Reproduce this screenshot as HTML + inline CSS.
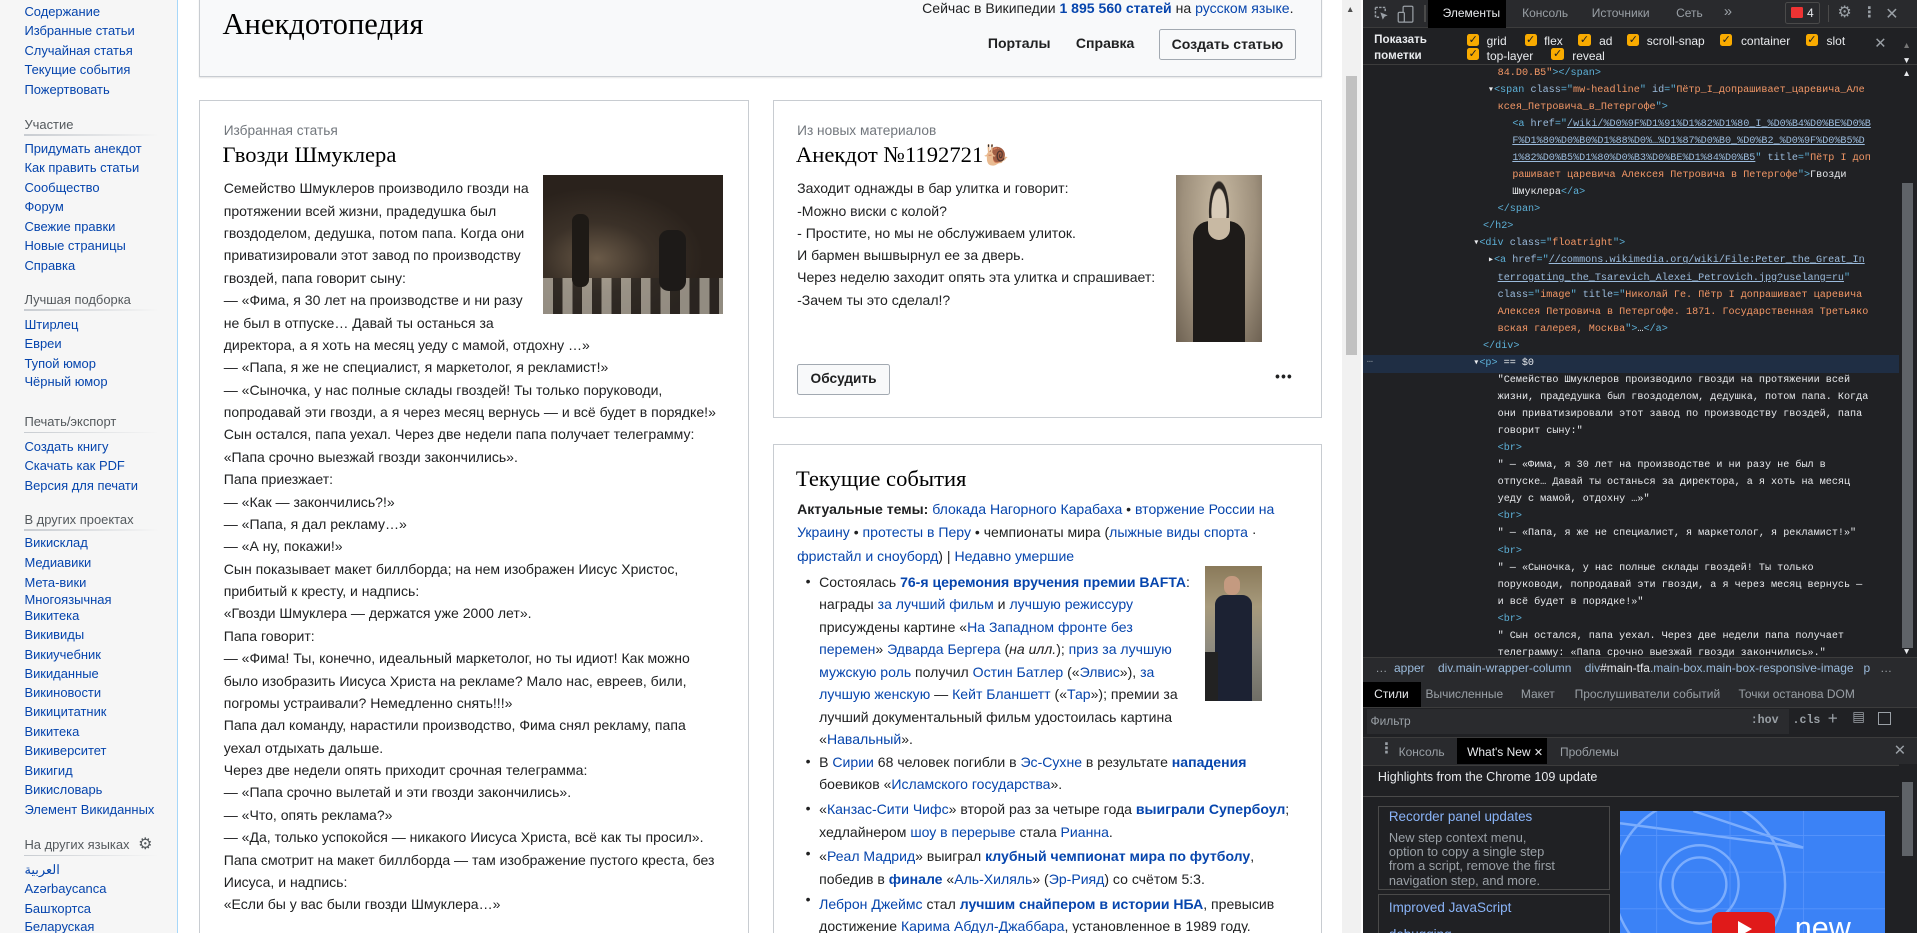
<!DOCTYPE html>
<html><head><meta charset="utf-8">
<style>
html,body{margin:0;padding:0;overflow:hidden;width:1917px;height:933px;background:#fff}
#w{position:absolute;left:0;top:0;width:1568px;height:763px;zoom:1.22258;overflow:hidden;font-family:"Liberation Sans",Arial,sans-serif}
.a{position:absolute;white-space:nowrap}
a,.l{color:#0645ad;text-decoration:none}
#side{position:absolute;left:0;top:0;width:145px;height:763px;background:#f6f6f6;border-right:1px solid #a7d7f9}
#side .a{font-size:10.6px;left:20px;color:#0645ad}
#side .h{color:#54595d}
#side .hr{position:absolute;left:20px;width:110px;height:1px;background:linear-gradient(90deg,#c8ccd1,#f6f6f6)}
.card{position:absolute;border:1px solid #c8ccd1;background:#fff;box-sizing:border-box}
.txt{font-size:11.5px;color:#202122}
.ser{font-family:"Liberation Serif","Noto Serif CJK SC",serif;color:#000}
.gray{color:#72777d;font-size:11.2px}
.btn{position:absolute;border:1px solid #a2a9b1;border-radius:2px;background:#f8f9fa;font-weight:bold;font-size:11.2px;color:#202122;box-sizing:border-box;text-align:center}
#dt{position:absolute;left:1115px;top:0;width:453px;height:763px;background:#202124;font-family:"Liberation Sans","DejaVu Sans",sans-serif;color:#9aa0a6;font-size:9.8px}
.mono{font-family:"Liberation Mono","DejaVu Sans Mono",monospace;font-size:8.3px}
.tg{color:#5db0d7}.an{color:#9bbbdc}.av{color:#f29766}.tx{color:#e8eaed}.un{text-decoration:underline;color:#9bbbdc}
.cb{position:absolute;width:10px;height:10px;background:#f9ab00;border-radius:2px;color:#202124;font-size:9px;line-height:10px;text-align:center;font-weight:bold}
</style></head><body><div id="w">

<div id="side">
<div class="a" style="top:3px">Содержание</div>
<div class="a" style="top:19px">Избранные статьи</div>
<div class="a" style="top:35px">Случайная статья</div>
<div class="a" style="top:51px">Текущие события</div>
<div class="a" style="top:67px">Пожертвовать</div>
<div class="a h" style="top:96px">Участие</div><div class="hr" style="top:110px"></div>
<div class="a" style="top:115px">Придумать анекдот</div>
<div class="a" style="top:131px">Как править статьи</div>
<div class="a" style="top:147px">Сообщество</div>
<div class="a" style="top:163px">Форум</div>
<div class="a" style="top:179px">Свежие правки</div>
<div class="a" style="top:195px">Новые страницы</div>
<div class="a" style="top:211px">Справка</div>
<div class="a h" style="top:239px">Лучшая подборка</div><div class="hr" style="top:253px"></div>
<div class="a" style="top:259px">Штирлец</div>
<div class="a" style="top:275px">Евреи</div>
<div class="a" style="top:291px">Тупой юмор</div>
<div class="a" style="top:306px">Чёрный юмор</div>
<div class="a h" style="top:339px">Печать/экспорт</div><div class="hr" style="top:353px"></div>
<div class="a" style="top:359px">Создать книгу</div>
<div class="a" style="top:375px">Скачать как PDF</div>
<div class="a" style="top:391px">Версия для печати</div>
<div class="a h" style="top:419px">В других проектах</div><div class="hr" style="top:433px"></div>
<div class="a" style="top:438px">Викисклад</div>
<div class="a" style="top:454px">Медиавики</div>
<div class="a" style="top:470px">Мета-вики</div>
<div class="a" style="top:484px;line-height:13px">Многоязычная<br>Викитека</div>
<div class="a" style="top:513px">Викивиды</div>
<div class="a" style="top:529px">Викиучебник</div>
<div class="a" style="top:545px">Викиданные</div>
<div class="a" style="top:560px">Викиновости</div>
<div class="a" style="top:576px">Викицитатник</div>
<div class="a" style="top:592px">Викитека</div>
<div class="a" style="top:608px">Викиверситет</div>
<div class="a" style="top:624px">Викигид</div>
<div class="a" style="top:640px">Викисловарь</div>
<div class="a" style="top:656px">Элемент Викиданных</div>
<div class="a h" style="top:685px">На других языках</div><div class="a h" style="left:113px;top:682px;font-size:13px">⚙</div><div class="hr" style="top:699px"></div>
<div class="a" style="top:705px">العربية</div>
<div class="a" style="top:721px">Azərbaycanca</div>
<div class="a" style="top:737px">Башҡортса</div>
<div class="a" style="top:752px">Беларуская</div>
</div>

<!-- header card -->
<div class="card" style="left:163px;top:-5px;width:918px;height:68px;background:#f8f9fa;box-shadow:0 1px 1px rgba(0,0,0,.1)"></div>
<div class="a ser" style="left:182px;top:6px;font-size:25px">Анекдотопедия</div>
<div class="a" style="right:510px;top:0px;font-size:11.5px;color:#202122">Сейчас в Википедии <b class="l">1 895 560 статей</b> на <span class="l">русском языке</span>.</div>
<div class="a" style="left:808px;top:29px;font-size:11.5px;font-weight:bold;color:#202122">Порталы</div>
<div class="a" style="left:880px;top:29px;font-size:11.5px;font-weight:bold;color:#202122">Справка</div>
<div class="btn" style="left:948px;top:24px;width:112px;height:25px;line-height:23px;font-size:11.5px">Создать статью</div>

<!-- card1 -->
<div class="card" style="left:163px;top:82px;width:450px;height:700px"></div>
<div class="a gray" style="left:183px;top:101px">Избранная статья</div>
<div class="a ser" style="left:182px;top:116px;font-size:18.5px">Гвозди Шмуклера</div>
<div class="a" style="left:444px;top:143px;width:147px;height:114px;background:radial-gradient(ellipse at 30% 60%,#6a5a48 0,#3b3128 30%,#2a221c 60%),#2a221c"><div style="position:absolute;left:0;bottom:0;width:147px;height:30px;background:repeating-linear-gradient(90deg,#d8d2c4 0 8px,#2a2622 8px 16px);opacity:.6"></div><div style="position:absolute;left:24px;top:32px;width:14px;height:60px;background:#1e1a16;border-radius:6px"></div><div style="position:absolute;left:95px;top:45px;width:22px;height:50px;background:#1d1a18;border-radius:8px"></div></div>
<div class="txt" style="position:absolute;left:183px;top:145px;line-height:18.3px;white-space:nowrap">
Семейство Шмуклеров производило гвозди на<br>протяжении всей жизни, прадедушка был<br>гвоздоделом, дедушка, потом папа. Когда они<br>приватизировали этот завод по производству<br>гвоздей, папа говорит сыну:<br>— «Фима, я 30 лет на производстве и ни разу<br>не был в отпуске… Давай ты останься за<br>директора, а я хоть на месяц уеду с мамой, отдохну …»<br>— «Папа, я же не специалист, я маркетолог, я рекламист!»<br>— «Сыночка, у нас полные склады гвоздей! Ты только поруководи,<br>попродавай эти гвозди, а я через месяц вернусь — и всё будет в порядке!»<br>Сын остался, папа уехал. Через две недели папа получает телеграмму:<br>«Папа срочно выезжай гвозди закончились».<br>Папа приезжает:<br>— «Как — закончились?!»<br>— «Папа, я дал рекламу…»<br>— «А ну, покажи!»<br>Сын показывает макет биллборда; на нем изображен Иисус Христос,<br>прибитый к кресту, и надпись:<br>«Гвозди Шмуклера — держатся уже 2000 лет».<br>Папа говорит:<br>— «Фима! Ты, конечно, идеальный маркетолог, но ты идиот! Как можно<br>было изобразить Иисуса Христа на рекламе? Мало нас, евреев, били,<br>погромы устраивали? Немедленно снять!!!»<br>Папа дал команду, нарастили производство, Фима снял рекламу, папа<br>уехал отдыхать дальше.<br>Через две недели опять приходит срочная телеграмма:<br>— «Папа срочно вылетай и эти гвозди закончились».<br>— «Что, опять реклама?»<br>— «Да, только успокойся — никакого Иисуса Христа, всё как ты просил».<br>Папа смотрит на макет биллборда — там изображение пустого креста, без<br>Иисуса, и надпись:<br>«Если бы у вас были гвозди Шмуклера…»
</div>

<!-- card2 -->
<div class="card" style="left:632px;top:82px;width:449px;height:260px"></div>
<div class="a gray" style="left:652px;top:101px">Из новых материалов</div>
<div class="a ser" style="left:651px;top:116px;font-size:18.5px">Анекдот №1192721<span style="font-family:'Noto Color Emoji','DejaVu Sans',sans-serif;font-size:17px;color:#a0622d">🐌</span></div>
<div class="txt" style="position:absolute;left:652px;top:145px;line-height:18.2px;white-space:nowrap">Заходит однажды в бар улитка и говорит:<br>-Можно виски с колой?<br>- Простите, но мы не обслуживаем улиток.<br>И бармен вышвырнул ее за дверь.<br>Через неделю заходит опять эта улитка и спрашивает:<br>-Зачем ты это сделал!?</div>
<div class="a" style="left:962px;top:143px;width:70px;height:137px;background:radial-gradient(ellipse at 50% 22%,#d8cbb8 0 12%,#2b2622 13% 16%,#bcae98 17%,#9e907c 60%,#6d6152)"><div style="position:absolute;left:14px;top:38px;width:42px;height:99px;background:#1e1b19;border-radius:14px 14px 0 0"></div><div style="position:absolute;left:26px;top:35px;width:18px;height:18px;background:#c8b9a3;border-radius:0 0 9px 9px"></div></div>
<div class="btn" style="left:652px;top:298px;width:76px;height:25px;line-height:23px">Обсудить</div>
<div class="a" style="left:1043px;top:302px;font-size:11px;color:#202122;letter-spacing:1px;font-weight:bold">•••</div>

<!-- card3 -->
<div class="card" style="left:632px;top:363px;width:449px;height:420px"></div>
<div class="a ser" style="left:651px;top:381px;font-size:18.5px">Текущие события</div>
<div class="txt" style="position:absolute;left:652px;top:407px;line-height:19.3px;white-space:nowrap"><b>Актуальные темы:</b> <span class="l">блокада Нагорного Карабаха</span> • <span class="l">вторжение России на</span><br><span class="l">Украину</span> • <span class="l">протесты в Перу</span> • чемпионаты мира (<span class="l">лыжные виды спорта</span> ·<br><span class="l">фристайл и сноуборд</span>) | <span class="l">Недавно умершие</span></div>
<div class="txt" style="position:absolute;left:670px;top:467px;line-height:18.4px;white-space:nowrap">Состоялась <b class="l">76-я церемония вручения премии BAFTA</b>:<br>награды <span class="l">за лучший фильм</span> и <span class="l">лучшую режиссуру</span><br>присуждены картине «<span class="l">На Западном фронте без<br>перемен</span>» <span class="l">Эдварда Бергера</span> (<i>на илл.</i>); <span class="l">приз за лучшую<br>мужскую роль</span> получил <span class="l">Остин Батлер</span> («<span class="l">Элвис</span>»), <span class="l">за<br>лучшую женскую</span> — <span class="l">Кейт Бланшетт</span> («<span class="l">Тар</span>»); премии за<br>лучший документальный фильм удостоилась картина<br>«<span class="l">Навальный</span>».</div>
<div class="txt" style="position:absolute;left:670px;top:614px;line-height:18.6px;white-space:nowrap">В <span class="l">Сирии</span> 68 человек погибли в <span class="l">Эс-Сухне</span> в результате <b class="l">нападения</b><br>боевиков «<span class="l">Исламского государства</span>».<br><div style="height:1.5px"></div>«<span class="l">Канзас-Сити Чифс</span>» второй раз за четыре года <b class="l">выиграли Супербоул</b>;<br>хедлайнером <span class="l">шоу в перерыве</span> стала <span class="l">Рианна</span>.<br><div style="height:1.5px"></div>«<span class="l">Реал Мадрид</span>» выиграл <b class="l">клубный чемпионат мира по футболу</b>,<br>победив в <b class="l">финале</b> «<span class="l">Аль-Хиляль</span>» (<span class="l">Эр-Рияд</span>) со счётом 5:3.<br><div style="height:1.5px"></div><span class="l">Леброн Джеймс</span> стал <b class="l">лучшим снайпером в истории НБА</b>, превысив<br>достижение <span class="l">Карима Абдул-Джаббара</span>, установленное в 1989 году.</div>
<div class="a txt" style="left:659px;top:469px">•</div>
<div class="a txt" style="left:659px;top:616px">•</div>
<div class="a txt" style="left:659px;top:654px">•</div>
<div class="a txt" style="left:659px;top:691px">•</div>
<div class="a txt" style="left:659px;top:729px">•</div>
<div class="a" style="left:986px;top:463px;width:46px;height:110px;background:linear-gradient(180deg,#8a7a5a 0,#a79a7c 30%,#8f8c80 60%,#6f6e66)"><div style="position:absolute;left:15px;top:8px;width:13px;height:16px;background:#c49a80;border-radius:6px"></div><div style="position:absolute;left:8px;top:24px;width:30px;height:86px;background:#1c2233;border-radius:8px 8px 0 0"></div><div style="position:absolute;left:0;top:70px;width:10px;height:40px;background:#222"></div></div>

<!-- page scrollbar -->
<div class="a" style="left:1098px;top:0;width:15px;height:763px;background:#f1f1f1"></div>
<div class="a" style="left:1101px;top:62px;width:9px;height:228px;background:#c1c1c1"></div>
<div class="a" style="left:1101px;top:3px;font-size:7px;color:#505050">▲</div>

<!-- devtools -->
<div id="dt">
<div class="a" style="left:0;top:0;width:453px;height:22px;background:#292a2d;border-bottom:1px solid #3c3c3c"></div>
<svg class="a" style="left:8px;top:4px" width="14" height="14" viewBox="0 0 14 14"><path d="M2 2h8v3M2 2v8h3" stroke="#9aa0a6" fill="none" stroke-width="1.2" stroke-dasharray="2 1"/><path d="M6 6l6 2.5-2.5 1L8 12z" fill="#9aa0a6"/></svg>
<svg class="a" style="left:28px;top:4px" width="14" height="15" viewBox="0 0 14 15"><rect x="5" y="1" width="8" height="13" rx="1" stroke="#9aa0a6" fill="none"/><rect x="1" y="6" width="5" height="8" rx="1" stroke="#9aa0a6" fill="#292a2d"/></svg>
<div class="a" style="left:50px;top:4px;width:1px;height:14px;background:#4a4a4a"></div>
<div class="a" style="left:53px;top:0;width:64px;height:23px;background:#000"></div>
<div class="a" style="left:65px;top:5px;color:#e8eaed">Элементы</div>
<div class="a" style="left:130px;top:5px">Консоль</div>
<div class="a" style="left:187px;top:5px">Источники</div>
<div class="a" style="left:256px;top:5px">Сеть</div>
<div class="a" style="left:295px;top:3px;font-size:12px">»</div>
<div class="a" style="left:345px;top:2px;width:29px;height:18px;border:1px solid #4a4a4a;border-radius:2px;box-sizing:border-box"></div>
<div class="a" style="left:350px;top:6px;width:10px;height:9px;background:#e33;border-radius:1px"></div>
<div class="a" style="left:363px;top:5px;color:#e8eaed">4</div>
<div class="a" style="left:380px;top:4px;width:1px;height:14px;background:#4a4a4a"></div>
<div class="a" style="left:388px;top:2px;font-size:13px">⚙</div>
<div class="a" style="left:408px;top:3px;font-size:12px;font-weight:bold">⋮</div>
<div class="a" style="left:427px;top:3px;font-size:13px">✕</div>

<div class="a" style="left:9px;top:26px;color:#e8eaed;font-weight:bold;line-height:13px;font-size:9.5px">Показать<br>пометки</div>
<div class="cb" style="left:85px;top:28px">✓</div><div class="a" style="left:101px;top:28px;color:#e8eaed">grid</div>
<div class="cb" style="left:132px;top:28px">✓</div><div class="a" style="left:148px;top:28px;color:#e8eaed">flex</div>
<div class="cb" style="left:176px;top:28px">✓</div><div class="a" style="left:193px;top:28px;color:#e8eaed">ad</div>
<div class="cb" style="left:216px;top:28px">✓</div><div class="a" style="left:232px;top:28px;color:#e8eaed">scroll-snap</div>
<div class="cb" style="left:292px;top:28px">✓</div><div class="a" style="left:309px;top:28px;color:#e8eaed">container</div>
<div class="cb" style="left:362px;top:28px">✓</div><div class="a" style="left:379px;top:28px;color:#e8eaed">slot</div>
<div class="cb" style="left:85px;top:39px">✓</div><div class="a" style="left:101px;top:40px;color:#e8eaed">top-layer</div>
<div class="cb" style="left:154px;top:39px">✓</div><div class="a" style="left:171px;top:40px;color:#e8eaed">reveal</div>
<div class="a" style="left:418px;top:29px;font-size:12px;color:#9aa0a6">✕</div>
<div class="a" style="left:0;top:52px;width:453px;height:1px;background:#3c3c3c"></div>

<div class="a mono" style="left:0;top:290px;width:438px;height:15px;background:#1f3a5f;opacity:.55"></div>
<div class="a mono" style="left:3px;top:290px;color:#9aa0a6">…</div>
<div class="a mono" style="left:0;top:53px;line-height:13.95px;width:436px;overflow:hidden">
<div style="padding-left:110px"><span class="av">84.D0.B5"</span><span class="tg">&gt;&lt;/span&gt;</span></div>
<div style="padding-left:102px"><span class="tx">▾</span><span class="tg">&lt;span </span><span class="an">class</span><span class="tg">="</span><span class="av">mw-headline</span><span class="tg">" </span><span class="an">id</span><span class="tg">="</span><span class="av">Пётр_I_допрашивает_царевича_Але</span></div>
<div style="padding-left:110px"><span class="av">ксея_Петровича_в_Петергофе</span><span class="tg">"&gt;</span></div>
<div style="padding-left:122px"><span class="tg">&lt;a </span><span class="an">href</span><span class="tg">="</span><span class="un">/wiki/%D0%9F%D1%91%D1%82%D1%80_I_%D0%B4%D0%BE%D0%B</span></div>
<div style="padding-left:122px"><span class="un">F%D1%80%D0%B0%D1%88%D0%…%D1%87%D0%B0_%D0%B2_%D0%9F%D0%B5%D</span></div>
<div style="padding-left:122px"><span class="un">1%82%D0%B5%D1%80%D0%B3%D0%BE%D1%84%D0%B5</span><span class="tg">" </span><span class="an">title</span><span class="tg">="</span><span class="av">Пётр I доп</span></div>
<div style="padding-left:122px"><span class="av">рашивает царевича Алексея Петровича в Петергофе</span><span class="tg">"&gt;</span><span class="tx">Гвозди</span></div>
<div style="padding-left:122px"><span class="tx">Шмуклера</span><span class="tg">&lt;/a&gt;</span></div>
<div style="padding-left:110px"><span class="tg">&lt;/span&gt;</span></div>
<div style="padding-left:98px"><span class="tg">&lt;/h2&gt;</span></div>
<div style="padding-left:90px"><span class="tx">▾</span><span class="tg">&lt;div </span><span class="an">class</span><span class="tg">="</span><span class="av">floatright</span><span class="tg">"&gt;</span></div>
<div style="padding-left:102px"><span class="tx">▸</span><span class="tg">&lt;a </span><span class="an">href</span><span class="tg">="</span><span class="un">//commons.wikimedia.org/wiki/File:Peter_the_Great_In</span></div>
<div style="padding-left:110px"><span class="un">terrogating_the_Tsarevich_Alexei_Petrovich.jpg?uselang=ru</span><span class="tg">"</span></div>
<div style="padding-left:110px"><span class="an">class</span><span class="tg">="</span><span class="av">image</span><span class="tg">" </span><span class="an">title</span><span class="tg">="</span><span class="av">Николай Ге. Пётр I допрашивает царевича</span></div>
<div style="padding-left:110px"><span class="av">Алексея Петровича в Петергофе. 1871. Государственная Третьяко</span></div>
<div style="padding-left:110px"><span class="av">вская галерея, Москва</span><span class="tg">"&gt;</span><span class="tx">…</span><span class="tg">&lt;/a&gt;</span></div>
<div style="padding-left:98px"><span class="tg">&lt;/div&gt;</span></div>
<div style="padding-left:90px"><span class="tx">▾</span><span class="tg">&lt;p&gt;</span><span class="tx"> == $0</span></div>
<div style="padding-left:110px" class="tx">"Семейство Шмуклеров производило гвозди на протяжении всей</div>
<div style="padding-left:110px" class="tx">жизни, прадедушка был гвоздоделом, дедушка, потом папа. Когда</div>
<div style="padding-left:110px" class="tx">они приватизировали этот завод по производству гвоздей, папа</div>
<div style="padding-left:110px" class="tx">говорит сыну:"</div>
<div style="padding-left:110px" class="tg">&lt;br&gt;</div>
<div style="padding-left:110px" class="tx">" — «Фима, я 30 лет на производстве и ни разу не был в</div>
<div style="padding-left:110px" class="tx">отпуске… Давай ты останься за директора, а я хоть на месяц</div>
<div style="padding-left:110px" class="tx">уеду с мамой, отдохну …»"</div>
<div style="padding-left:110px" class="tg">&lt;br&gt;</div>
<div style="padding-left:110px" class="tx">" — «Папа, я же не специалист, я маркетолог, я рекламист!»"</div>
<div style="padding-left:110px" class="tg">&lt;br&gt;</div>
<div style="padding-left:110px" class="tx">" — «Сыночка, у нас полные склады гвоздей! Ты только</div>
<div style="padding-left:110px" class="tx">поруководи, попродавай эти гвозди, а я через месяц вернусь —</div>
<div style="padding-left:110px" class="tx">и всё будет в порядке!»"</div>
<div style="padding-left:110px" class="tg">&lt;br&gt;</div>
<div style="padding-left:110px" class="tx">" Сын остался, папа уехал. Через две недели папа получает</div>
<div style="padding-left:110px" class="tx">телеграмму: «Папа срочно выезжай гвозди закончились»."</div>
</div>
<div class="a" style="left:438px;top:53px;width:15px;height:484px;background:#202124"></div>
<div class="a" style="left:441px;top:150px;width:9px;height:380px;background:#5f6368"></div>
<div class="a" style="left:441px;top:56px;font-size:7px;color:#e8eaed">▲</div>
<div class="a" style="left:441px;top:528px;font-size:7px;color:#e8eaed">▼</div>
<div class="a" style="left:441px;top:33px;font-size:7px;color:#777">▲</div>
<div class="a" style="left:441px;top:45px;font-size:7px;color:#e8eaed">▼</div>

<div class="a" style="left:0;top:537px;width:453px;height:20px;background:#292a2d;border-top:1px solid #3c3c3c;border-bottom:1px solid #3c3c3c"></div>
<div class="a" style="left:10px;top:541px;color:#9aa0a6">…&nbsp; <span style="color:#9bbbdc">apper</span>&nbsp;&nbsp;&nbsp; <span style="color:#9bbbdc">div.main-wrapper-column</span>&nbsp;&nbsp;&nbsp; <span style="color:#9bbbdc">div</span><span style="color:#e8eaed">#main-tfa</span><span style="color:#9bbbdc">.main-box.main-box-responsive-image</span>&nbsp;&nbsp; <span style="color:#9bbbdc">p</span>&nbsp;&nbsp; …</div>
<div class="a" style="left:0;top:558px;width:453px;height:20px;background:#292a2d;border-bottom:1px solid #3c3c3c"></div>
<div class="a" style="left:0;top:558px;width:47px;height:20px;background:#000"></div>
<div class="a" style="left:9px;top:562px;color:#e8eaed">Стили</div>
<div class="a" style="left:51px;top:562px">Вычисленные</div>
<div class="a" style="left:129px;top:562px">Макет</div>
<div class="a" style="left:173px;top:562px">Прослушиватели событий</div>
<div class="a" style="left:307px;top:562px">Точки останова DOM</div>
<div class="a" style="left:3px;top:580px;width:345px;height:20px;background:#2a2b2e"></div>
<div class="a" style="left:6px;top:584px">Фильтр</div>
<div class="a mono" style="left:317px;top:584px;font-size:9.5px;font-weight:bold">:hov&nbsp; .cls</div>
<div class="a" style="left:380px;top:580px;font-size:14px">+</div>
<div class="a" style="left:400px;top:580px;font-size:11px">▤</div>
<div class="a" style="left:421px;top:582px;width:11px;height:11px;border:1px solid #9aa0a6;box-sizing:border-box"></div>
<div class="a" style="left:0;top:603px;width:453px;height:22px;background:#292a2d;border-top:1px solid #3c3c3c;border-bottom:1px solid #3c3c3c"></div>
<div class="a" style="left:13px;top:605px;font-size:12px;font-weight:bold">⋮</div>
<div class="a" style="left:29px;top:609px">Консоль</div>
<div class="a" style="left:77px;top:604px;width:73px;height:21px;background:#000"></div>
<div class="a" style="left:85px;top:609px;color:#e8eaed">What's New <span style="font-size:9px">✕</span></div>
<div class="a" style="left:161px;top:609px">Проблемы</div>
<div class="a" style="left:434px;top:607px;font-size:12px">✕</div>
<div class="a" style="left:12px;top:630px;color:#e8eaed;font-size:10.3px">Highlights from the Chrome 109 update</div>
<div class="a" style="left:0;top:651px;width:438px;height:1px;background:#4a4a4a"></div>
<div class="a" style="left:12px;top:659px;width:190px;height:69px;border:1px solid #4a4a4a;box-sizing:border-box"></div>
<div class="a" style="left:21px;top:662px;color:#8ab4f8;font-size:11px">Recorder panel updates</div>
<div class="a" style="left:21px;top:680px;color:#9aa0a6;font-size:10.5px;line-height:11.5px">New step context menu,<br>option to copy a single step<br>from a script, remove the first<br>navigation step, and more.</div>
<div class="a" style="left:12px;top:731px;width:190px;height:40px;border:1px solid #4a4a4a;box-sizing:border-box"></div>
<div class="a" style="left:21px;top:736px;color:#8ab4f8;font-size:11px">Improved JavaScript</div>
<div class="a" style="left:21px;top:758px;color:#8ab4f8;font-size:11px">debugging</div>
<div class="a" style="left:210px;top:663px;width:217px;height:100px;background:#3b82f6;overflow:hidden">
<svg width="217" height="100"><g stroke="#8cb8ff" fill="none" stroke-width="2" opacity=".8"><circle cx="65" cy="60" r="32"/><circle cx="65" cy="60" r="22"/><path d="M0 10L150 30M60 0L150 30"/><circle cx="65" cy="60" r="70"/></g><g stroke="#6aa0ff" stroke-width=".7" opacity=".6"><path d="M0 20H217M0 50H217M0 80H217M30 0V100M90 0V100M150 0V100"/></g></svg>
<div style="position:absolute;left:75px;top:83px;width:52px;height:34px;background:#e01a1a;border-radius:7px"></div>
<div style="position:absolute;left:97px;top:90px;width:0;height:0;border-left:12px solid #fff;border-top:7px solid transparent;border-bottom:7px solid transparent"></div>
<div style="position:absolute;left:143px;top:82px;color:#fff;font-size:25px">new</div>
</div>
<div class="a" style="left:438px;top:625px;width:15px;height:138px;background:#202124"></div>
<div class="a" style="left:441px;top:640px;width:9px;height:60px;background:#5f6368"></div>
</div>

</div></body></html>
